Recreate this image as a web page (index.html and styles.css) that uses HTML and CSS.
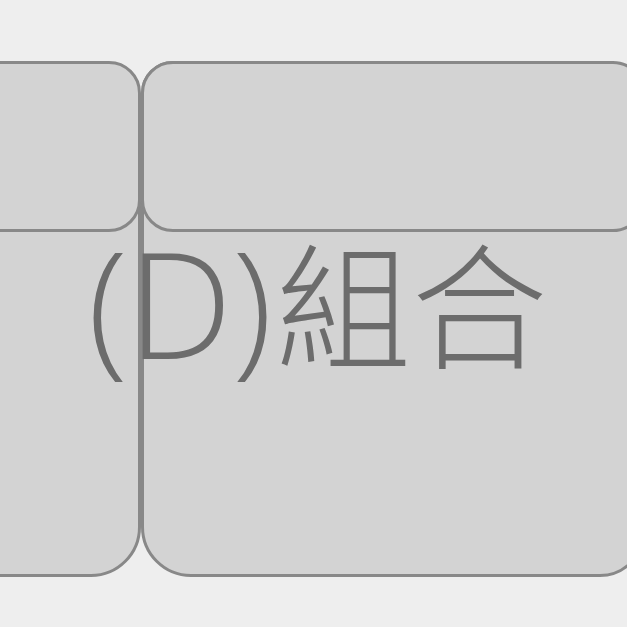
FILE: index.html
```html
<!DOCTYPE html>
<html lang="zh-Hant">
<head>
<meta charset="utf-8">
<link rel="stylesheet" href="styles.css">
</head>
<body>
<div class="stage">
  <div class="col col-left"><div class="cap"></div></div>
  <div class="col col-right"><div class="cap"></div></div>
</div>
<div class="label"><span class="latin">(D)</span>組合</div>
</body>
</html>
```
FILE: styles.css
```css
html, body {
  margin: 0;
  padding: 0;
  overflow: hidden;
  background: #eeeeee;
  width: 627px;
  height: 627px;
}
body {
  position: relative;
}
.stage {
  display: flex;
  margin-left: -100px;
  padding-top: 61px;
  width: 745px;
}
.col {
  flex: none;
  box-sizing: border-box;
  height: 516px;
  border: 3px solid #888888;
  border-radius: 50px;
  background: #d3d3d3;
}
.col-left {
  width: 241px;
}
.col-right {
  width: 504px;
  border-radius: 32px 45px 45px 50px;
}
.cap {
  box-sizing: border-box;
  margin: -3px;
  height: 171px;
  border: 3px solid #888888;
  border-radius: 32px;
  background: #d3d3d3;
}
.label {
  position: absolute;
  left: 4px;
  top: 232px;
  width: 627px;
  text-align: center;
  font-family: "Noto Sans CJK TC", sans-serif;
  font-size: 136px;
  font-weight: 300;
  line-height: 136px;
  color: #6c6c6c;
  white-space: nowrap;
}
.latin {
  font-family: "Open Sans", "Noto Sans", sans-serif;
  font-size: 148px;
  margin-right: 3px;
}
```
